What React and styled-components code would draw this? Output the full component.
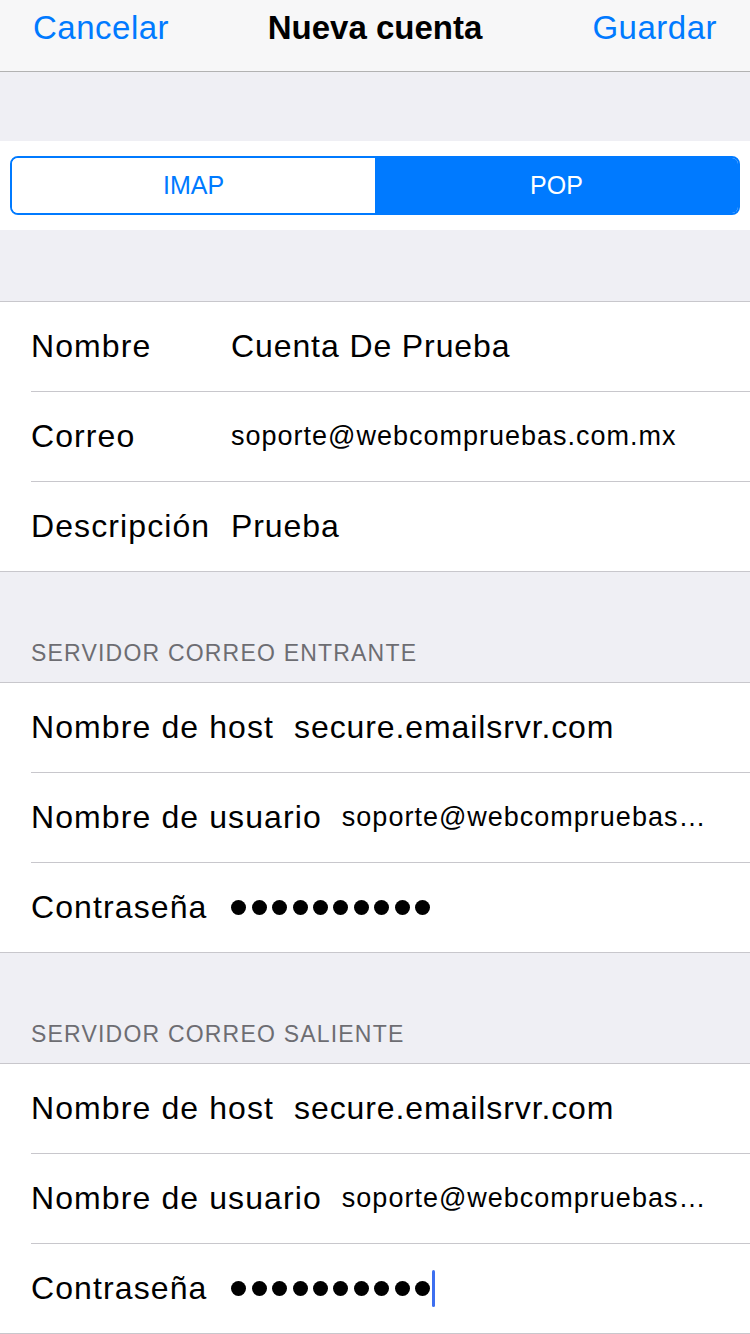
import React from 'react';
import styled, {createGlobalStyle} from 'styled-components';

const GlobalStyle = createGlobalStyle`
    body {
        margin: 0;
        background: #efeff4;
        font-family: "Liberation Sans", Arial, sans-serif;
        -webkit-font-smoothing: antialiased;
    }
`

const sections = [
    {
        header: 'SERVIDOR CORREO ENTRANTE',
        rows: [
            {label: 'Nombre de host', value: 'secure.emailsrvr.com'},
            {label: 'Nombre de usuario', value: 'soporte@webcompruebas.com.mx', small: true},
            {label: 'Contraseña', password: 10},
        ],
    },
    {
        header: 'SERVIDOR CORREO SALIENTE',
        rows: [
            {label: 'Nombre de host', value: 'secure.emailsrvr.com'},
            {label: 'Nombre de usuario', value: 'soporte@webcompruebas.com.mx', small: true},
            {label: 'Contraseña', password: 10, focused: true},
        ],
    },
]

function Password({count, focused}) {
    return (
        <DotRow aria-label="contraseña">
            {Array.from({length: count}).map((_, i) => <Dot key={i}/>)}
            {focused && <Caret/>}
        </DotRow>
    )
}

function FieldRow({row, labelWidth}) {
    return (
        <Row>
            <Label $width={labelWidth}>{row.label}</Label>
            {row.password
                ? <Password count={row.password} focused={row.focused}/>
                : <Value $small={row.small}>{row.value}</Value>}
        </Row>
    )
}

function App() {
    return (
        <Screen>
            <GlobalStyle/>
            <NavBar>
                <NavButton>Cancelar</NavButton>
                <Title>Nueva cuenta</Title>
                <NavButton $right>Guardar</NavButton>
            </NavBar>

            <Spacer $h={69}/>
            <SegmentBar>
                <Segmented>
                    <Segment>IMAP</Segment>
                    <Segment $active>POP</Segment>
                </Segmented>
            </SegmentBar>
            <Spacer $h={71}/>

            <Group>
                <FieldRow labelWidth={200} row={{label: 'Nombre', value: 'Cuenta De Prueba'}}/>
                <FieldRow labelWidth={200} row={{label: 'Correo', value: 'soporte@webcompruebas.com.mx', small: true}}/>
                <FieldRow labelWidth={200} row={{label: 'Descripción', value: 'Prueba'}}/>
            </Group>

            {sections.map(section => (
                <React.Fragment key={section.header}>
                    <SectionHeader>{section.header}</SectionHeader>
                    <Group>
                        {section.rows.map(row => <FieldRow key={row.label} row={row}/>)}
                    </Group>
                </React.Fragment>
            ))}
        </Screen>
    )
}

const Screen = styled.div`
    width: 750px;
    min-height: 1334px;
    background: #efeff4;
`

const NavBar = styled.header`
    height: 72px;
    box-sizing: border-box;
    padding: 0 33px 16px;
    display: grid;
    grid-template-columns: 1fr auto 1fr;
    align-items: center;
    background: #f7f7f8;
    border-bottom: 1px solid #b2b2b2;
`

const NavButton = styled.span`
    font-size: 33px;
    letter-spacing: 0.5px;
    color: #007aff;
    justify-self: ${p => p.$right ? 'end' : 'start'};
`

const Title = styled.span`
    font-size: 33px;
    font-weight: bold;
    color: #000;
`

const Spacer = styled.div`
    height: ${p => p.$h}px;
`

const SegmentBar = styled.div`
    background: #fff;
    padding: 15px 10px;
`

const Segmented = styled.div`
    display: flex;
    height: 59px;
    box-sizing: border-box;
    border: 2px solid #007aff;
    border-radius: 8px;
    overflow: hidden;
`

const Segment = styled.div`
    flex: 1;
    display: flex;
    align-items: center;
    justify-content: center;
    font-size: 25px;
    color: ${p => p.$active ? '#fff' : '#007aff'};
    background: ${p => p.$active ? '#007aff' : '#fff'};
`

const Group = styled.div`
    background: #fff;
    border-top: 1px solid #c8c7cc;
    border-bottom: 1px solid #c8c7cc;
`

const Row = styled.div`
    height: 89px;
    margin-left: 31px;
    padding-right: 43px;
    display: flex;
    align-items: center;
    color: #000;

    & + & {
        border-top: 1px solid #c8c7cc;
    }
`

const Label = styled.span`
    flex: none;
    font-size: 32px;
    letter-spacing: 1.1px;
    white-space: nowrap;
    ${p => p.$width ? `width: ${p.$width}px;` : 'margin-right: 20px;'}
`

const Value = styled.span`
    flex: 1;
    min-width: 0;
    font-size: ${p => p.$small ? 27 : 32}px;
    letter-spacing: ${p => p.$small ? 1 : 0.9}px;
    white-space: nowrap;
    overflow: hidden;
    text-overflow: ellipsis;
`

const DotRow = styled.span`
    display: flex;
    align-items: center;
    gap: 5.4px;
    margin-left: 4px;
`

const Dot = styled.span`
    width: 15px;
    height: 15px;
    border-radius: 50%;
    background: #000;
`

const Caret = styled.span`
    width: 3px;
    height: 37px;
    margin-left: -3px;
    border-radius: 2px;
    background: #3d6ff0;
`

const SectionHeader = styled.div`
    height: 110px;
    box-sizing: border-box;
    padding: 0 0 14px 31px;
    display: flex;
    align-items: flex-end;
    font-size: 23px;
    letter-spacing: 1.2px;
    line-height: 30px;
    color: #6d6d72;
`

export default App
